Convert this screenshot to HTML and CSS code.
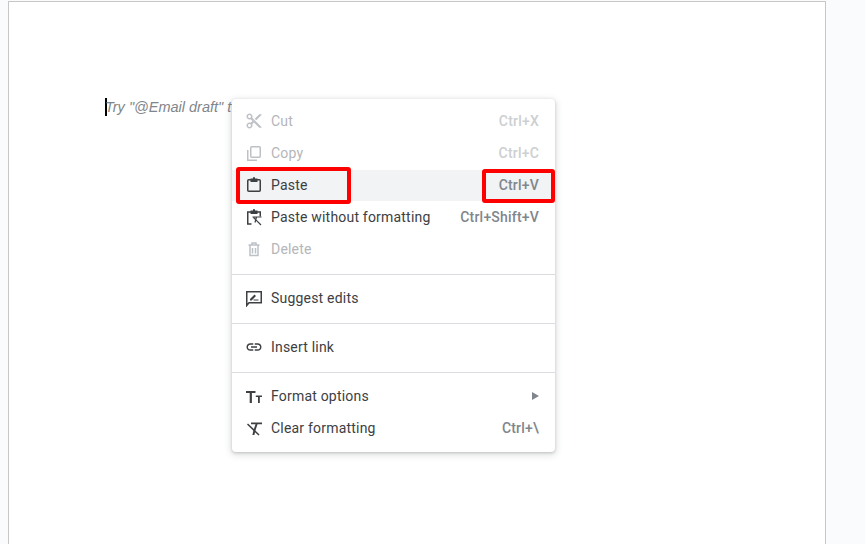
FILE: index.html
```html
<!DOCTYPE html>
<html lang="en">
<head>
    <meta charset="UTF-8">
    <title>Document</title>
    <meta name="viewport" content="width=device-width, initial-scale=1">
    <link rel="stylesheet" href="styles.css">
</head>

<body>
<div class="sheet">
    <div class="doc-line">
        <span class="caret"></span>
        <span class="hint">Try "@Email draft" t</span>
    </div>
</div>

<div class="context-menu">
    <div class="menu-item disabled">
        <svg class="icon" viewBox="0 0 24 24"><path class="fill" d="M9.64 7.64c.23-.5.36-1.05.36-1.64 0-2.21-1.79-4-4-4S2 3.79 2 6s1.79 4 4 4c.59 0 1.14-.13 1.64-.36L10 12l-2.36 2.36C7.14 14.13 6.59 14 6 14c-2.21 0-4 1.79-4 4s1.79 4 4 4 4-1.79 4-4c0-.59-.13-1.14-.36-1.64L12 14l7 7h3v-1L9.64 7.64zM6 8c-1.1 0-2-.89-2-2s.9-2 2-2 2 .89 2 2-.9 2-2 2zm0 12c-1.1 0-2-.89-2-2s.9-2 2-2 2 .89 2 2-.9 2-2 2zm6-7.5c-.28 0-.5-.22-.5-.5s.22-.5.5-.5.5.22.5.5-.22.5-.5.5zM19 3l-6 6 2 2 7-7V3h-3z"/></svg>
        <span class="label">Cut</span>
        <span class="shortcut">Ctrl+X</span>
    </div>
    <div class="menu-item disabled">
        <svg class="icon" viewBox="0 0 18 18"><rect class="line" x="5.750" y="2.750" width="9.500" height="10.500" rx="1"/><path class="line" d="M2.750 6v10.250H12"/></svg>
        <span class="label">Copy</span>
        <span class="shortcut">Ctrl+C</span>
    </div>
    <div class="menu-item active">
        <svg class="icon" viewBox="0 0 18 18"><rect class="line dark" x="2.750" y="3.750" width="12.500" height="11.500" rx="1"/><path class="fill dark" d="M5.500 2.500H8C8 .6 10 .6 10 2.500h2.500V6h-7z"/></svg>
        <span class="label">Paste</span>
        <span class="shortcut">Ctrl+V</span>
    </div>
    <div class="menu-item">
        <svg class="icon" viewBox="0 0 18 18"><path class="line dark" d="M6.500 16H2.750V4h12.500v4.500"/><path class="fill dark" d="M5.500 2.500H8C8 .6 10 .6 10 2.500h2.500V6h-7z"/><path class="line dark thin" d="M7.500 9h9M11.500 9l-1.500 5.500M8.500 9.500l7.500 7.500"/></svg>
        <span class="label">Paste without formatting</span>
        <span class="shortcut">Ctrl+Shift+V</span>
    </div>
    <div class="menu-item disabled">
        <svg class="icon" viewBox="0 0 18 18"><path class="line" d="M5 5.500v10h8v-10M3.500 5h11M7.500 8v5.500M10.500 8v5.500M7 4.500V3h4v1.500"/></svg>
        <span class="label">Delete</span>
    </div>

    <div class="separator"></div>

    <div class="menu-item">
        <svg class="icon" viewBox="0 0 18 18"><path class="line dark" d="M1.750 16.500V2.750h14.500v11H4z"/><path class="fill dark" d="M5 11.500V9.900L9.500 5.500 11 7l-4.400 4.500zM8.500 10.500h5v1h-5z"/></svg>
        <span class="label">Suggest edits</span>
    </div>

    <div class="separator"></div>

    <div class="menu-item">
        <svg class="icon" viewBox="0 0 24 24"><path class="fill dark" d="M3.900 12c0-1.710 1.390-3.100 3.100-3.100h4V7H7c-2.760 0-5 2.240-5 5s2.240 5 5 5h4v-1.900H7c-1.710 0-3.100-1.390-3.100-3.100zM8 13h8v-2H8v2zm9-6h-4v1.900h4c1.710 0 3.100 1.390 3.100 3.100s-1.390 3.100-3.100 3.100h-4V17h4c2.760 0 5-2.240 5-5s-2.240-5-5-5z"/></svg>
        <span class="label">Insert link</span>
    </div>

    <div class="separator"></div>

    <div class="menu-item">
        <svg class="icon" viewBox="0 0 18 18"><path class="fill dark" d="M1 4h9.500v2H6.900v10H4.700V6H1zM10.800 8.500H17v1.600h-2.200V16h-1.800v-5.900h-2.200z"/></svg>
        <span class="label">Format options</span>
        <span class="submenu-arrow"></span>
    </div>
    <div class="menu-item">
        <svg class="icon" viewBox="0 0 18 18"><path class="fill dark" d="M6 3.500h11v1.700H6zM10.600 5h2l-2.300 7-.9 4H7.400l1-4.500z"/><path class="line dark" d="M2.500 5l11.500 11"/></svg>
        <span class="label">Clear formatting</span>
        <span class="shortcut">Ctrl+\</span>
    </div>
</div>

<div class="highlight highlight-paste"></div>
<div class="highlight highlight-key"></div>
</body>
</html>
```

FILE: styles.css
```css
body {
    margin: 0;
    height: 544px;
    position: relative;
    overflow: hidden;
    background-color: #f9fbfd;
    font-family: Roboto, Arial, sans-serif;
}
.sheet {
    width: 816px;
    height: 543px;
    margin-left: 8px;
    position: relative;
    top: 1px;
    background-color: white;
    border: 1px solid #c7c7c7;
    border-bottom: none;
    box-sizing: content-box;
}
.doc-line {
    display: flex;
    align-items: center;
    padding: 96px 0 0 96px;
}
.caret {
    width: 2px;
    height: 18px;
    background-color: black;
}
.hint {
    margin-left: -2px;
    font-family: "Liberation Sans", Arial, sans-serif;
    font-size: 14.5px;
    font-style: italic;
    color: #80868b;
    white-space: nowrap;
}
.context-menu {
    position: absolute;
    left: 232px;
    top: 99px;
    width: 323px;
    padding: 6px 0 8px;
    background-color: white;
    border-radius: 4px;
    box-shadow: 0 1px 3px rgba(60, 64, 67, 0.25), 0 2px 6px 2px rgba(60, 64, 67, 0.12);
}
.menu-item {
    display: flex;
    align-items: center;
    height: 32px;
    padding: 0 16px 0 13px;
    font-size: 14px;
    letter-spacing: 0.2px;
    color: #3c4043;
}
.menu-item.active {
    background: linear-gradient(#f1f3f4, #f1f3f4) 0 1px no-repeat;
}
.menu-item.disabled {
    color: #b4b6b9;
}
.icon {
    width: 18px;
    height: 18px;
    margin-right: 8px;
    flex: none;
}
.fill {
    fill: #bdc1c6;
}
.line {
    fill: none;
    stroke: #bdc1c6;
    stroke-width: 1.5;
}
.fill.dark {
    fill: #3c4043;
}
.line.dark {
    stroke: #3c4043;
}
.line.thin {
    stroke-width: 1.2;
}
.label {
    flex: 1;
}
.shortcut {
    font-weight: 500;
    color: #80868b;
}
.disabled .shortcut {
    color: #cdcfd1;
}
.submenu-arrow {
    width: 0;
    height: 0;
    border-left: 7px solid #80868b;
    border-top: 4px solid transparent;
    border-bottom: 4px solid transparent;
}
.separator {
    height: 1px;
    margin: 9px 0 7px;
    background-color: #dadce0;
}
.highlight {
    position: absolute;
    box-sizing: border-box;
    border: 4px solid #fe0000;
    border-radius: 3px;
}
.highlight-paste {
    left: 236px;
    top: 167px;
    width: 115px;
    height: 37px;
}
.highlight-key {
    left: 482px;
    top: 169px;
    width: 73px;
    height: 34px;
}
```
